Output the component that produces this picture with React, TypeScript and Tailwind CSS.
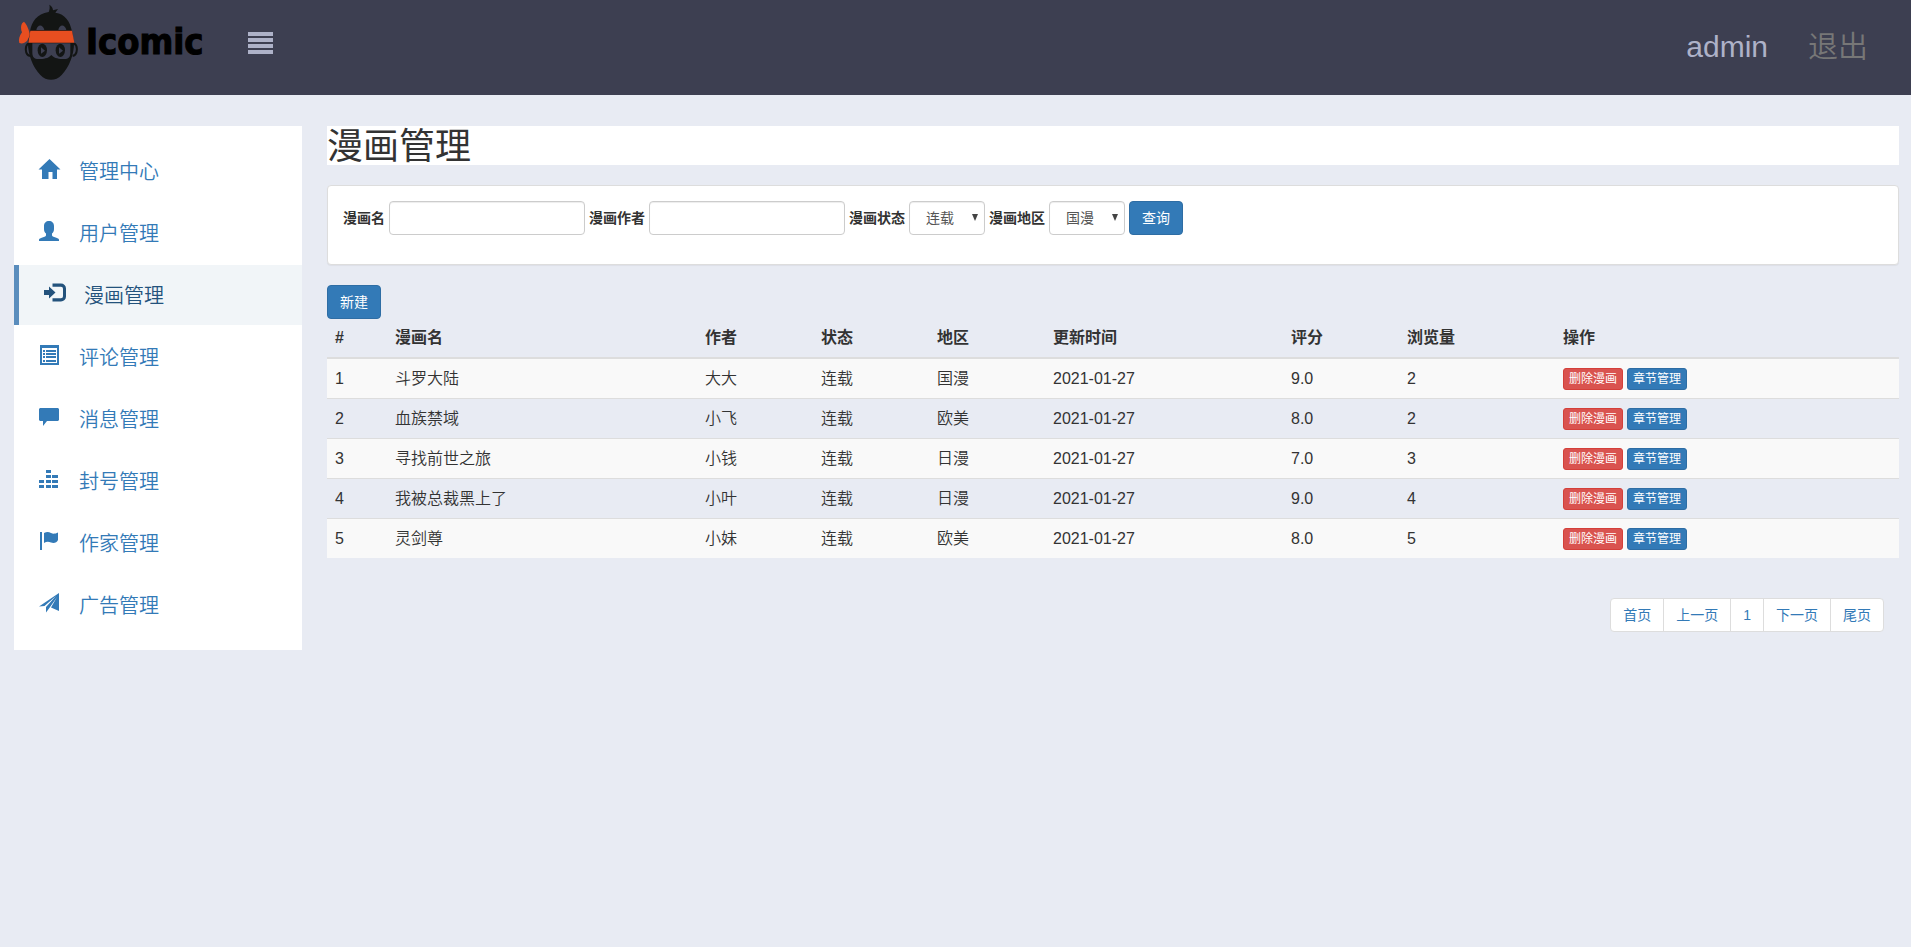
import { ReactNode } from "react";

type MenuItem = {
  label: string;
  icon: ReactNode;
  active?: boolean;
};

const MENU: MenuItem[] = [
  {
    label: "管理中心",
    icon: <path d="M10.5 0 21.500 10.5H18V20h-4.500v-7h-4v7H3v-9.500H-.5z" />,
  },
  {
    label: "用户管理",
    icon: (
      <path d="M10 0c3 0 5 2 5 5v3c0 2-.8 3.500-2 4.500V14c0 1 .5 1.300 1.500 1.700l3.500 1.300c1.300.5 2 1 2 2v1H0v-1c0-1 .7-1.500 2-2l3.500-1.300C6.500 15.300 7 15 7 14v-1.500C5.800 11.500 5 10 5 8V5c0-3 2-5 5-5z" />
    ),
  },
  {
    label: "漫画管理",
    active: true,
    icon: (
      <>
        <path d="M0 7h5V3.500L11.500 9.500 5 15.500V12H0z" />
        <path d="M8.500 0.500H17a5 5 0 0 1 5 5v8a5 5 0 0 1-5 5H8.500v-3.200H17a2 2 0 0 0 2-2V5.700a2 2 0 0 0-2-2H8.500z" />
      </>
    ),
  },
  {
    label: "评论管理",
    icon: (
      <path
        fillRule="evenodd"
        d="M1 0h19v20H1zM3 3v15h15V3zM4 5h2v2H4zM7 5h10v2H7zM4 8h2v2H4zM7 8h10v2H7zM4 11h2v2H4zM7 11h10v2H7zM4 15h2v2H4zM7 15h10v2H7z"
      />
    ),
  },
  {
    label: "消息管理",
    icon: (
      <path d="M1 1h18l1 1v11l-1 1H8l-4 5v-5H1l-1-1V2z" />
    ),
  },
  {
    label: "封号管理",
    icon: (
      <path d="M7 1h5v3H7zM7 6h5v3H7zM13 6h6v3h-6zM0 11h5v3H0zM7 11h5v3H7zM13 11h6v3h-6zM0 16h5v3H0zM7 16h5v3H7zM13 16h6v3h-6z" />
    ),
  },
  {
    label: "作家管理",
    icon: (
      <path d="M1 1h2v18H1zM5 2c3-1.500 5-1 7 0s4 1 7-.5V9c-1 2.500-4 3.500-7 2.500-2.500-1-4.500-1-7 .5z" />
    ),
  },
  {
    label: "广告管理",
    icon: (
      <path d="M20 0v18l-8-3.500L18 4 10 15.500 7 19.500V14L17 3 5.500 13 0 13.500z" />
    ),
  },
];

const COMICS = [
  { id: 1, name: "斗罗大陆", author: "大大", state: "连载", area: "国漫", time: "2021-01-27", score: "9.0", views: 2 },
  { id: 2, name: "血族禁域", author: "小飞", state: "连载", area: "欧美", time: "2021-01-27", score: "8.0", views: 2 },
  { id: 3, name: "寻找前世之旅", author: "小钱", state: "连载", area: "日漫", time: "2021-01-27", score: "7.0", views: 3 },
  { id: 4, name: "我被总裁黑上了", author: "小叶", state: "连载", area: "日漫", time: "2021-01-27", score: "9.0", views: 4 },
  { id: 5, name: "灵剑尊", author: "小妹", state: "连载", area: "欧美", time: "2021-01-27", score: "8.0", views: 5 },
];

const HEADERS = ["#", "漫画名", "作者", "状态", "地区", "更新时间", "评分", "浏览量", "操作"];
const PAGES = ["首页", "上一页", "1", "下一页", "尾页"];

const Logo = () => (
  <a href="#" className="flex w-[204px] items-center gap-2 pl-[18px]" aria-label="Icomic">
    <svg className="shrink-0" width="60" height="78" viewBox="54 9 180 234" aria-hidden="true">
      {/* ears */}
      <path d="M86 130c-12 6-12 34 4 38M222 130c12 6 12 34-4 38" fill="none" stroke="#131514" strokeWidth="6" />
      {/* head */}
      <path
        d="M148 14c8 5 11 11 11 17l15-4-8 11c30 4 44 27 50 56l6 35c0 35-14 72-37 96-10 11-20 14-32 14s-22-3-32-14c-23-24-37-61-37-96l6-35c5-29 20-52 56-58 3-7 4-14 2-22z"
        fill="#131514"
      />
      <path d="M109 90c3-18 20-18 24 0zM175 90c3-18 20-18 24 0z" fill="#3d3f51" />
      {/* eye area */}
      <path d="M97 130h114v28c0 13-6 19-18 19-17 0-28-1-39-12-11 11-22 12-39 12-12 0-18-6-18-19z" fill="#3d3f51" />
      <ellipse cx="127" cy="151" rx="14" ry="20" fill="#131514" />
      <ellipse cx="181" cy="151" rx="14" ry="20" fill="#131514" />
      <path d="M123 142l12 10-12 9zM177 142l12 10-12 9z" fill="#3d3f51" />
      {/* headband */}
      <path d="M91 92h125l7 36H85z" fill="#e74e20" />
      <path d="M88 96c-4-14-10-26-16-31-9 4-11 18-6 32-8 10-11 23-8 32 13 4 23-3 26-12 5-8 6-14 4-21z" fill="#e74e20" />
    </svg>
    <span className="font-['DejaVu_Sans_Condensed','DejaVu_Sans',sans-serif] text-4xl leading-none font-bold text-black [-webkit-text-stroke:1px_black]">
      Icomic
    </span>
  </a>
);

const FilterSelect = ({ id, options }: { id: string; options: string[] }) => (
  <div className="relative">
    <select
      id={id}
      className="block h-[34px] w-[76px] appearance-none rounded border border-[#ccc] bg-white pl-4 text-sm text-[#555] shadow-[inset_0_1px_1px_rgba(0,0,0,0.075)]"
    >
      {options.map((option) => (
        <option key={option}>{option}</option>
      ))}
    </select>
    <svg
      className="pointer-events-none absolute top-[13px] right-[7px]"
      width="6"
      height="7"
      viewBox="0 0 6 7"
      aria-hidden="true"
    >
      <path d="M0 0h6L3 7z" fill="#444" />
    </svg>
  </div>
);

const inputClass =
  "h-[34px] w-[196px] rounded border border-[#ccc] bg-white px-3 text-sm text-[#555] shadow-[inset_0_1px_1px_rgba(0,0,0,0.075)]";
const primaryClass =
  "h-[34px] rounded border border-[#2e6da4] bg-[#337ab7] px-3 text-sm text-white";

const App: React.FC = () => {
  return (
    <div className="min-h-screen bg-[#e8ebf3] font-['Liberation_Sans','Noto_Sans_CJK_SC',sans-serif] text-[#333]">
      <header className="flex h-[95px] items-start justify-between bg-[#3d3f51]">
        <div className="flex items-start">
          <div className="pt-[3px]">
            <Logo />
          </div>
          <button type="button" aria-label="菜单" className="mt-8 ml-11">
            <svg width="25" height="22" viewBox="0 0 25 22" fill="#aeb2c8">
              <path d="M0 0h25v4H0zM0 6h25v4H0zM0 12h25v4H0zM0 18h25v4H0z" />
            </svg>
          </button>
        </div>
        <nav className="flex gap-10 pt-6 pr-[43px] text-3xl leading-[45px]">
          <a href="#" className="text-[#aeb2c8]">
            admin
          </a>
          <a href="#" className="font-[350] text-[#777]">
            退出
          </a>
        </nav>
      </header>

      <div className="flex items-start pt-[31px] pr-3 pl-[14px]">
        <aside className="w-72 shrink-0 bg-white py-[15px]">
          <ul className="flex flex-col gap-[2px]">
            {MENU.map((item) => (
              <li key={item.label}>
                <a
                  href="#"
                  className={`flex h-[60px] items-center gap-4 pt-[2px] pl-[25px] text-xl font-[350] ${
                    item.active
                      ? "border-l-[5px] border-[#5a8dbd] bg-[#f1f5f8] text-[#23527c]"
                      : "text-[#337ab7]"
                  }`}
                >
                  <svg
                    className="mb-[6px] overflow-visible"
                    width="24"
                    height="20"
                    viewBox="0 0 24 20"
                    fill="currentColor"
                    aria-hidden="true"
                  >
                    {item.icon}
                  </svg>
                  {item.label}
                </a>
              </li>
            ))}
          </ul>
        </aside>

        <main className="ml-[25px] min-w-0 flex-1">
          <h1 className="bg-white pt-[2px] text-4xl leading-[37px]">漫画管理</h1>

          <form className="mt-5 flex items-center gap-1 rounded border border-[#ddd] bg-white px-[15px] pt-[15px] pb-[29px] text-sm shadow-[0_1px_1px_rgba(0,0,0,0.05)]">
            <label htmlFor="name" className="font-bold">
              漫画名
            </label>
            <input id="name" type="text" className={inputClass} />
            <label htmlFor="author" className="font-bold">
              漫画作者
            </label>
            <input id="author" type="text" className={inputClass} />
            <label htmlFor="state" className="font-bold">
              漫画状态
            </label>
            <FilterSelect id="state" options={["连载", "完结"]} />
            <label htmlFor="area" className="font-bold">
              漫画地区
            </label>
            <FilterSelect id="area" options={["国漫", "日漫", "欧美"]} />
            <button type="button" className={primaryClass}>
              查询
            </button>
          </form>

          <button type="button" className={`${primaryClass} mt-5 block`}>
            新建
          </button>

          <table className="w-full table-fixed border-collapse text-left text-base leading-[23px]">
            <colgroup>
              <col className="w-[60px]" />
              <col className="w-[310px]" />
              <col className="w-[116px]" />
              <col className="w-[116px]" />
              <col className="w-[116px]" />
              <col className="w-[238px]" />
              <col className="w-[116px]" />
              <col className="w-[156px]" />
              <col className="w-[344px]" />
            </colgroup>
            <thead>
              <tr className="border-b-2 border-[#ddd]">
                {HEADERS.map((header) => (
                  <th key={header} className="px-2 pt-[7px] pb-2 font-bold">
                    {header}
                  </th>
                ))}
              </tr>
            </thead>
            <tbody>
              {COMICS.map((comic) => (
                <tr
                  key={comic.id}
                  className="border-t border-[#ddd] font-[350] first:border-t-0 odd:bg-[#f9f9f9]"
                >
                  <td className="p-2">{comic.id}</td>
                  <td className="p-2">{comic.name}</td>
                  <td className="p-2">{comic.author}</td>
                  <td className="p-2">{comic.state}</td>
                  <td className="p-2">{comic.area}</td>
                  <td className="p-2">{comic.time}</td>
                  <td className="p-2">{comic.score}</td>
                  <td className="p-2">{comic.views}</td>
                  <td className="p-2">
                    <div className="flex gap-1 pt-px font-normal">
                      <button
                        type="button"
                        className="h-[22px] rounded-[3px] border border-[#d43f3a] bg-[#d9534f] px-[5px] text-xs text-white"
                      >
                        删除漫画
                      </button>
                      <button
                        type="button"
                        className="h-[22px] rounded-[3px] border border-[#2e6da4] bg-[#337ab7] px-[5px] text-xs text-white"
                      >
                        章节管理
                      </button>
                    </div>
                  </td>
                </tr>
              ))}
            </tbody>
          </table>

          <nav aria-label="分页" className="mt-10 mr-[15px] flex justify-end">
            <ul className="flex rounded border border-[#ddd] bg-white text-sm">
              {PAGES.map((page) => (
                <li key={page} className="border-l border-[#ddd] first:border-l-0">
                  <a href="#" className="block px-3 py-[6px] text-[#337ab7]">
                    {page}
                  </a>
                </li>
              ))}
            </ul>
          </nav>
        </main>
      </div>
    </div>
  );
};

export default App;
